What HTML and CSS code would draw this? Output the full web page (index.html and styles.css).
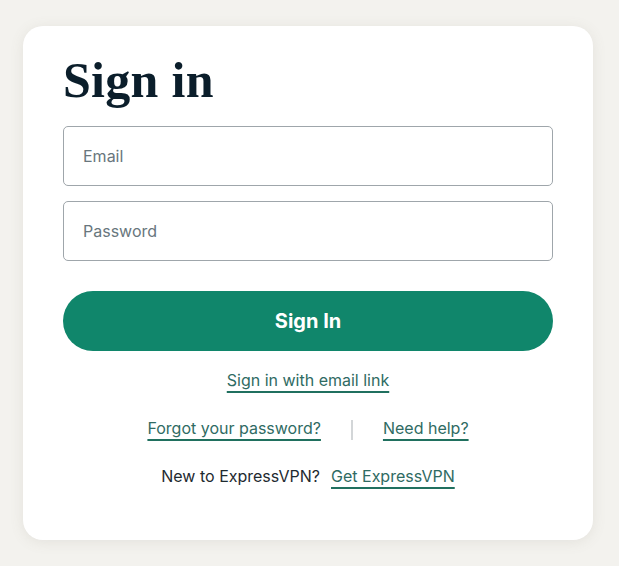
FILE: index.html
```html
<!DOCTYPE html>
<html lang="en">
<head>
<meta charset="utf-8">
<link rel="stylesheet" href="styles.css">
</head>
<body>
<main class="card">
  <h1 class="title">Sign in</h1>
  <form class="form">
    <input class="field" type="email" placeholder="Email">
    <input class="field" type="password" placeholder="Password">
    <button class="submit" type="button">Sign In</button>
  </form>
  <div class="links">
    <div class="row"><a class="link" href="#">Sign in with email link</a></div>
    <div class="row row-split">
      <a class="link" href="#">Forgot your password?</a>
      <span class="divider"></span>
      <a class="link" href="#">Need help?</a>
    </div>
    <div class="row"><span class="plain">New to ExpressVPN?</span><a class="link" href="#">Get ExpressVPN</a></div>
  </div>
</main>
</body>
</html>
```

FILE: styles.css
```css
* { box-sizing: border-box; }
html, body { margin: 0; padding: 0; }
body {
  background: #f3f2ee;
  font-family: Inter, "Noto Sans", sans-serif;
  width: 619px;
  height: 566px;
  overflow: hidden;
}
.card {
  margin: 26px 0 0 23px;
  width: 570px;
  height: 514px;
  background: #ffffff;
  border-radius: 20px;
  box-shadow: 0 2px 14px rgba(120, 115, 95, 0.12);
  padding: 24px 40px 0 40px;
}
.title {
  margin: 0;
  font-family: "Liberation Serif", "DejaVu Serif", serif;
  font-weight: 700;
  font-size: 50px;
  line-height: 60px;
  color: #0b1e2b;
  letter-spacing: 0.3px;
}
.form {
  margin-top: 16px;
  display: flex;
  flex-direction: column;
}
.field {
  height: 60px;
  width: 100%;
  border: 1px solid #9fa6ab;
  border-radius: 5px;
  padding: 0 19px;
  font-family: Inter, "Noto Sans", sans-serif;
  font-size: 16px;
  color: #1b2a33;
  background: #fff;
  outline: none;
}
.field + .field { margin-top: 15px; }
.field::placeholder { color: #68767d; }
.submit {
  margin-top: 30px;
  height: 60px;
  border: none;
  border-radius: 30px;
  background: #10866b;
  color: #ffffff;
  font-family: Inter, "Noto Sans", sans-serif;
  font-weight: 700;
  font-size: 20px;
}
.links {
  margin-top: 17px;
  display: flex;
  flex-direction: column;
  gap: 24px;
}
.row {
  display: flex;
  justify-content: center;
  align-items: center;
  font-size: 16px;
  line-height: 24px;
}
.row-split { gap: 30px; }
.link {
  color: #2f6b63;
  text-decoration: underline;
  text-decoration-color: #20705f;
  text-decoration-thickness: 2px;
  text-underline-offset: 5px;
}
.plain {
  color: #1e2a30;
  margin-right: 11px;
}
.divider {
  width: 2px;
  height: 20px;
  background: #d3d6d8;
  margin-top: 4px;
}
```
